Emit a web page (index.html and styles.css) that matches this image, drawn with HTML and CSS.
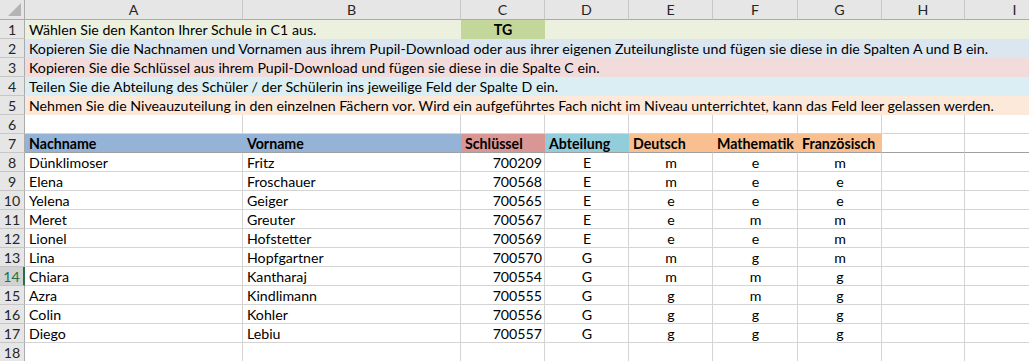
FILE: index.html
```html
<!DOCTYPE html>
<html lang="de">
<head>
<meta charset="utf-8">
<title>Tabelle</title>
<link rel="stylesheet" href="styles.css">
</head>
<body>
<div class="sheet">
  <div class="corner"><span class="tri"></span></div>
  <div class="ch">A</div><div class="ch">B</div><div class="ch">C</div><div class="ch">D</div><div class="ch">E</div><div class="ch">F</div><div class="ch">G</div><div class="ch">H</div><div class="ch last">I</div>

  <div class="rh">1</div>
  <div class="c fill-g span2">Wählen Sie den Kanton Ihrer Schule in C1 aus.</div>
  <div class="c fill-g2 b ctr">TG</div>
  <div class="c fill-g spanrest"></div>

  <div class="rh">2</div>
  <div class="c fill-blue spanall">Kopieren Sie die Nachnamen und Vornamen aus ihrem Pupil-Download oder aus ihrer eigenen Zuteilungliste und fügen sie diese in die Spalten A und B ein.</div>

  <div class="rh">3</div>
  <div class="c fill-pink spanall">Kopieren Sie die Schlüssel aus ihrem Pupil-Download und fügen sie diese in die Spalte C ein.</div>

  <div class="rh">4</div>
  <div class="c fill-cyan spanall">Teilen Sie die Abteilung des Schüler / der Schülerin ins jeweilige Feld der Spalte D ein.</div>

  <div class="rh">5</div>
  <div class="c fill-orange spanall">Nehmen Sie die Niveauzuteilung in den einzelnen Fächern vor. Wird ein aufgeführtes Fach nicht im Niveau unterrichtet, kann das Feld leer gelassen werden.</div>

  <div class="rh">6</div>
  <div class="c"></div><div class="c"></div><div class="c"></div><div class="c"></div><div class="c"></div><div class="c"></div><div class="c"></div><div class="c"></div><div class="c"></div>

  <div class="rh">7</div>
  <div class="c hd h-blue">Nachname</div>
  <div class="c hd h-blue">Vorname</div>
  <div class="c hd h-red">Schlüssel</div>
  <div class="c hd h-cyan">Abteilung</div>
  <div class="c hd h-orange">Deutsch</div>
  <div class="c hd h-orange">Mathematik</div>
  <div class="c hd h-orange">Französisch</div>
  <div class="c hd"></div>
  <div class="c hd"></div>

  <div class="rh">8</div>
  <div class="c">Dünklimoser</div><div class="c">Fritz</div><div class="c num">700209</div><div class="c ctr">E</div><div class="c ctr">m</div><div class="c ctr">e</div><div class="c ctr">m</div><div class="c"></div><div class="c"></div>

  <div class="rh">9</div>
  <div class="c">Elena</div><div class="c">Froschauer</div><div class="c num">700568</div><div class="c ctr">E</div><div class="c ctr">m</div><div class="c ctr">e</div><div class="c ctr">e</div><div class="c"></div><div class="c"></div>

  <div class="rh">10</div>
  <div class="c">Yelena</div><div class="c">Geiger</div><div class="c num">700565</div><div class="c ctr">E</div><div class="c ctr">e</div><div class="c ctr">e</div><div class="c ctr">e</div><div class="c"></div><div class="c"></div>

  <div class="rh">11</div>
  <div class="c">Meret</div><div class="c">Greuter</div><div class="c num">700567</div><div class="c ctr">E</div><div class="c ctr">e</div><div class="c ctr">m</div><div class="c ctr">m</div><div class="c"></div><div class="c"></div>

  <div class="rh">12</div>
  <div class="c">Lionel</div><div class="c">Hofstetter</div><div class="c num">700569</div><div class="c ctr">E</div><div class="c ctr">e</div><div class="c ctr">e</div><div class="c ctr">m</div><div class="c"></div><div class="c"></div>

  <div class="rh">13</div>
  <div class="c">Lina</div><div class="c">Hopfgartner</div><div class="c num">700570</div><div class="c ctr">G</div><div class="c ctr">m</div><div class="c ctr">g</div><div class="c ctr">m</div><div class="c"></div><div class="c"></div>

  <div class="rh sel">14</div>
  <div class="c">Chiara</div><div class="c">Kantharaj</div><div class="c num">700554</div><div class="c ctr">G</div><div class="c ctr">m</div><div class="c ctr">m</div><div class="c ctr">g</div><div class="c"></div><div class="c"></div>

  <div class="rh">15</div>
  <div class="c">Azra</div><div class="c">Kindlimann</div><div class="c num">700555</div><div class="c ctr">G</div><div class="c ctr">g</div><div class="c ctr">m</div><div class="c ctr">g</div><div class="c"></div><div class="c"></div>

  <div class="rh">16</div>
  <div class="c">Colin</div><div class="c">Kohler</div><div class="c num">700556</div><div class="c ctr">G</div><div class="c ctr">g</div><div class="c ctr">g</div><div class="c ctr">g</div><div class="c"></div><div class="c"></div>

  <div class="rh">17</div>
  <div class="c">Diego</div><div class="c">Lebiu</div><div class="c num">700557</div><div class="c ctr">G</div><div class="c ctr">g</div><div class="c ctr">g</div><div class="c ctr">g</div><div class="c"></div><div class="c"></div>

  <div class="rh">18</div>
  <div class="c"></div><div class="c"></div><div class="c"></div><div class="c"></div><div class="c"></div><div class="c"></div><div class="c"></div><div class="c"></div><div class="c"></div>
</div>
</body>
</html>
```
FILE: styles.css
```css
html, body {
  margin: 0;
  padding: 0;
  background: #ffffff;
  overflow: hidden;
}

.sheet {
  display: grid;
  grid-template-columns: 25px 218px 218px 84px 84px 84px 85px 84px 83px 100px;
  grid-template-rows: 20px;
  grid-auto-rows: 19px;
  width: 1065px;
  font-family: Lato, "Liberation Sans", sans-serif;
  font-size: 14.2px;
  color: #000;
}

.sheet > div {
  box-sizing: border-box;
  white-space: nowrap;
  overflow: visible;
}

.corner {
  background: #e6e6e6;
  border-right: 1px solid #ababab;
  border-bottom: 1px solid #ababab;
  position: relative;
}
.tri {
  position: absolute;
  right: 3px;
  bottom: 3px;
  width: 0;
  height: 0;
  border-left: 13px solid transparent;
  border-bottom: 13px solid #b4b4b4;
}

.ch {
  background: #e6e6e6;
  border-right: 1px solid #c6c6c6;
  border-bottom: 1px solid #ababab;
  text-align: center;
  line-height: 20px;
  color: #262626;
}

.rh {
  background: #e6e6e6;
  border-right: 1px solid #ababab;
  border-bottom: 1px solid #c6c6c6;
  text-align: center;
  line-height: 20px;
  color: #262626;
}
.rh.sel {
  background: #d2d2d2;
  color: #217346;
  border-right: 2px solid #217346;
}

.c {
  border-right: 1px solid #d4d4d4;
  border-bottom: 1px solid #d4d4d4;
  padding: 0 3px 0 4px;
  line-height: 20px;
  overflow: hidden;
}
.c.spanall, .c.span2 { overflow: visible; position: relative; z-index: 1; }

.span2 { grid-column: 2 / span 2; }
.spanrest { grid-column: 5 / -1; }
.spanall { grid-column: 2 / -1; }

.fill-g { background: #ebf1de; border-color: #ebf1de; }
.fill-g2 { background: #c4d79b; border-color: #c4d79b; }
.fill-blue { background: #dce6f1; border-color: #dce6f1; }
.fill-pink { background: #f2dcdb; border-color: #f2dcdb; }
.fill-cyan { background: #daeef3; border-color: #daeef3; }
.fill-orange { background: #fde9d9; border-color: #fde9d9; }

.b { font-weight: 700; }
.ctr { text-align: center; }
.num { text-align: right; padding-right: 2px; }

.hd {
  font-weight: 700;
  border-bottom-color: #a0a0a0;
}
.h-blue { background: #95b3d7; border-right-color: #95b3d7; }
.h-red { background: #da9694; border-right-color: #da9694; }
.h-cyan { background: #92cddc; border-right-color: #92cddc; }
.h-orange { background: #fabf8f; border-right-color: #fabf8f; }
```
